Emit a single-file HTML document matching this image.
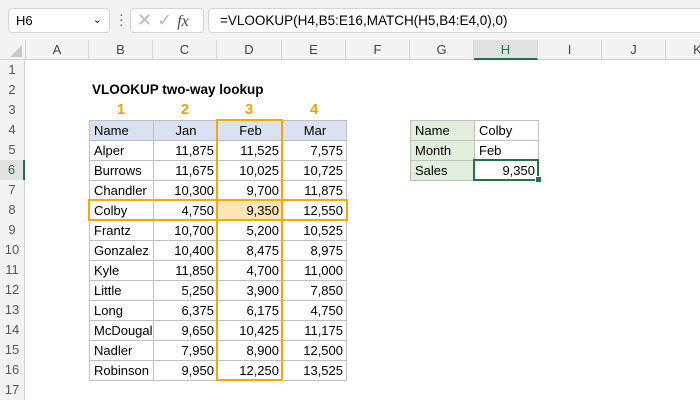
<!DOCTYPE html>
<html><head><style>
body{margin:0;width:700px;height:400px;overflow:hidden;background:#fff;font-family:"Liberation Sans",Arial,sans-serif;position:relative}
.a{position:absolute}
.top{left:0;top:0;width:700px;height:40px;background:#f3f3f3}
.box{background:#fff;border:1px solid #d4d4d4;border-radius:4px;box-sizing:border-box}
.colh{top:40px;height:20px;background:#f3f3f3;border-bottom:1px solid #d0d0d0;box-sizing:border-box;font-size:13px;color:#444;text-align:center;line-height:20px;border-right:1px solid #d8d8d8}
.rowh{left:0;width:25px;height:20px;background:#f3f3f3;border-right:1px solid #d0d0d0;box-sizing:border-box;font-size:13px;color:#555;text-align:center;line-height:20px}
table{border-collapse:collapse;position:absolute;font-size:13px;table-layout:fixed}
td{border:1px solid #bfbfbf;height:19px;padding:0 3px 0 4px;line-height:19px;white-space:nowrap;overflow:hidden}
td.r{text-align:right}
.hd td{background:#dae1f1}
.n{color:#f2a007;font-weight:bold;font-size:15px;text-align:center;top:100px;width:64px;height:20px;line-height:20px}
</style></head><body>
<div class="a top"></div>
<div class="a box" style="left:8px;top:8px;width:102px;height:25px;font-size:13px;line-height:23px;padding-left:7px">H6<span style="position:absolute;right:7px;top:0;font-size:11px">&#8964;</span></div>
<div class="a" style="left:119px;top:12px;width:2px;height:16px;color:#555;font-size:14px;line-height:5px">·<br>·<br>·</div>
<div class="a box" style="left:130px;top:8px;width:74px;height:25px;color:#bbb;font-size:18px;line-height:22px;padding-left:6px">✕ <span style="color:#bbb">✓</span> <i style="color:#444;font-family:'Liberation Serif',serif;font-size:16px">fx</i></div>
<div class="a box" style="left:208px;top:8px;width:500px;height:25px;font-size:13.5px;line-height:23px;padding-left:11px">=VLOOKUP(H4,B5:E16,MATCH(H5,B4:E4,0),0)</div>

<div class="a colh" style="left:0;width:26px"><svg width="26" height="20" style="position:absolute;left:0;top:0"><polygon points="22,5 22,17 10,17" fill="#c8c8c8"/></svg></div>
<div class="a colh" style="left:26px;width:63px">A</div>
<div class="a colh" style="left:89px;width:64px">B</div>
<div class="a colh" style="left:153px;width:64px">C</div>
<div class="a colh" style="left:217px;width:65px">D</div>
<div class="a colh" style="left:282px;width:64px">E</div>
<div class="a colh" style="left:346px;width:64px">F</div>
<div class="a colh" style="left:410px;width:64px">G</div>
<div class="a colh" style="left:474px;width:64px;background:#e1e1e1;border-bottom:2px solid #217346;color:#217346">H</div>
<div class="a colh" style="left:538px;width:64px">I</div>
<div class="a colh" style="left:602px;width:64px">J</div>
<div class="a colh" style="left:666px;width:64px">K</div>

<div class="a rowh" style="top:60px">1</div><div class="a rowh" style="top:80px">2</div><div class="a rowh" style="top:100px">3</div><div class="a rowh" style="top:120px">4</div><div class="a rowh" style="top:140px">5</div><div class="a rowh" style="top:160px;background:#e1e1e1;color:#217346;border-right:2px solid #217346">6</div><div class="a rowh" style="top:180px">7</div><div class="a rowh" style="top:200px">8</div><div class="a rowh" style="top:220px">9</div><div class="a rowh" style="top:240px">10</div><div class="a rowh" style="top:260px">11</div><div class="a rowh" style="top:280px">12</div><div class="a rowh" style="top:300px">13</div><div class="a rowh" style="top:320px">14</div><div class="a rowh" style="top:340px">15</div><div class="a rowh" style="top:360px">16</div><div class="a rowh" style="top:380px">17</div>

<div class="a" style="left:92px;top:80px;font-size:13.5px;font-weight:bold;line-height:20px">VLOOKUP two-way lookup</div>
<div class="a n" style="left:89px">1</div><div class="a n" style="left:153px">2</div><div class="a n" style="left:217px">3</div><div class="a n" style="left:282px">4</div>

<table style="left:89px;top:120px;width:257px">
<colgroup><col style="width:64px"><col style="width:64px"><col style="width:65px"><col style="width:64px"></colgroup>
<tr class="hd"><td>Name</td><td style="text-align:center">Jan</td><td style="text-align:center">Feb</td><td style="text-align:center">Mar</td></tr>
<tr><td>Alper</td><td class="r">11,875</td><td class="r">11,525</td><td class="r">7,575</td></tr>
<tr><td>Burrows</td><td class="r">11,675</td><td class="r">10,025</td><td class="r">10,725</td></tr>
<tr><td>Chandler</td><td class="r">10,300</td><td class="r">9,700</td><td class="r">11,875</td></tr>
<tr><td>Colby</td><td class="r">4,750</td><td class="r" style="background:#fde5b6">9,350</td><td class="r">12,550</td></tr>
<tr><td>Frantz</td><td class="r">10,700</td><td class="r">5,200</td><td class="r">10,525</td></tr>
<tr><td>Gonzalez</td><td class="r">10,400</td><td class="r">8,475</td><td class="r">8,975</td></tr>
<tr><td>Kyle</td><td class="r">11,850</td><td class="r">4,700</td><td class="r">11,000</td></tr>
<tr><td>Little</td><td class="r">5,250</td><td class="r">3,900</td><td class="r">7,850</td></tr>
<tr><td>Long</td><td class="r">6,375</td><td class="r">6,175</td><td class="r">4,750</td></tr>
<tr><td>McDougal</td><td class="r">9,650</td><td class="r">10,425</td><td class="r">11,175</td></tr>
<tr><td>Nadler</td><td class="r">7,950</td><td class="r">8,900</td><td class="r">12,500</td></tr>
<tr><td>Robinson</td><td class="r">9,950</td><td class="r">12,250</td><td class="r">13,525</td></tr>
</table>
<div class="a" style="left:216px;top:119px;width:63px;height:258px;border:2px solid #f2a900"></div>
<div class="a" style="left:88px;top:199px;width:256px;height:18px;border:2px solid #f2a900"></div>

<table style="left:410px;top:120px;width:128px">
<colgroup><col style="width:64px"><col style="width:64px"></colgroup>
<tr><td style="background:#e2efda">Name</td><td>Colby</td></tr>
<tr><td style="background:#e2efda">Month</td><td>Feb</td></tr>
<tr><td style="background:#e2efda">Sales</td><td class="r">9,350</td></tr>
</table>
<div class="a" style="left:473px;top:159px;width:62px;height:18px;border:2px solid #217346"></div>
<div class="a" style="left:535px;top:176px;width:5px;height:5px;background:#217346;border:1px solid #fff"></div>
</body></html>
